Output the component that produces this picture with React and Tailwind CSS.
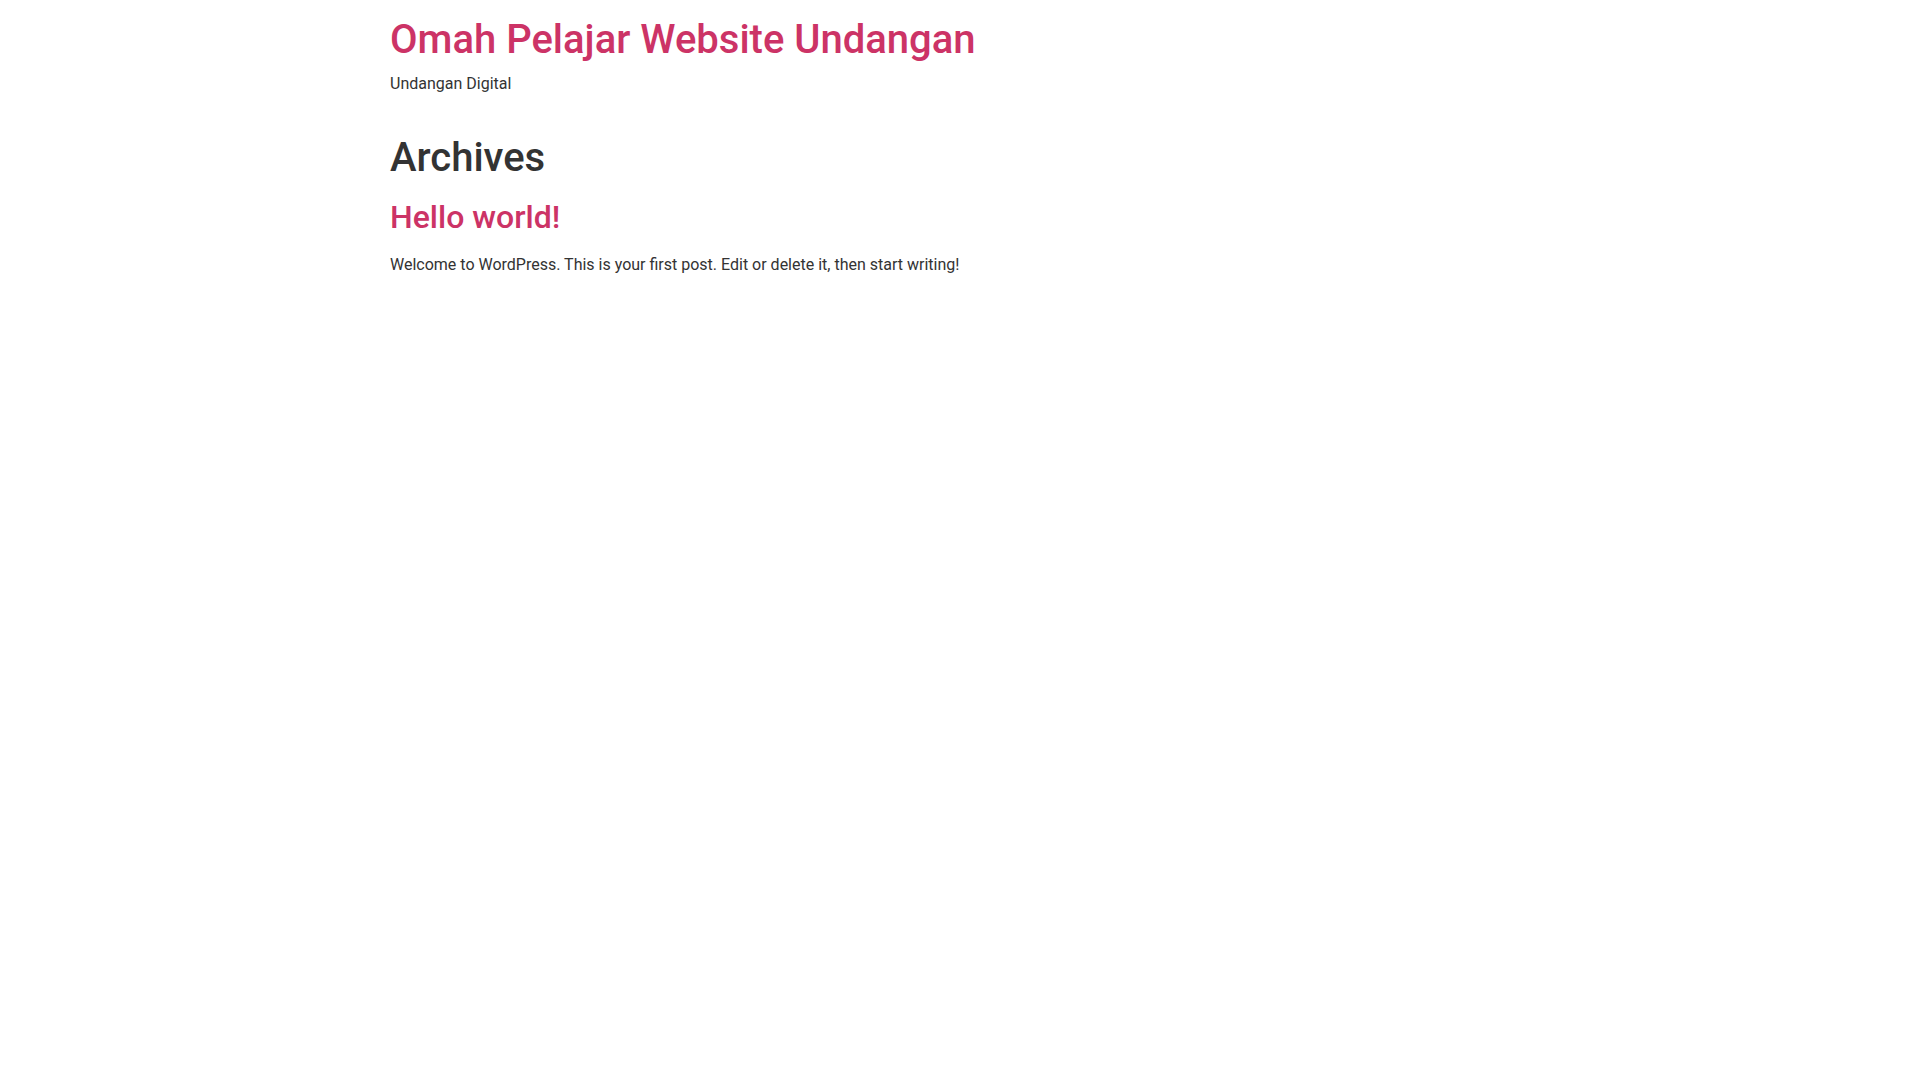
import React from 'react';

export default function App() {
    return (
        <div className="min-h-screen bg-white text-[#333] font-['Roboto',sans-serif]">
            <div className="w-[1140px] mx-auto">
                <header className="pt-4">
                    <h1 className="text-[40px] leading-[48px] font-medium text-[#cc3366] mb-2">
                        Omah Pelajar Website Undangan
                    </h1>
                    <p className="text-base leading-6">Undangan Digital</p>
                </header>

                <main className="mt-[38px]">
                    <h1 className="text-[40px] leading-[48px] font-medium mb-4">Archives</h1>
                    <article>
                        <h2 className="text-[32px] leading-[38px] font-medium text-[#cc3366] mb-[17px]">
                            Hello world!
                        </h2>
                        <p className="text-base leading-6">
                            Welcome to WordPress. This is your first post. Edit or delete it, then start writing!
                        </p>
                    </article>
                </main>
            </div>
        </div>
    );
}
